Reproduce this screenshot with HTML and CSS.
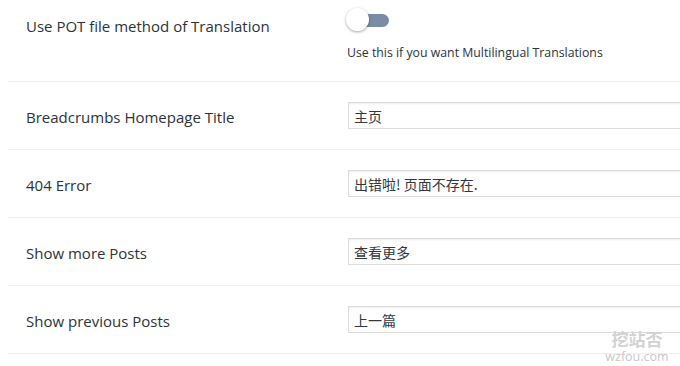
FILE: index.html
```html
<!DOCTYPE html>
<html lang="en">
<head>
    <meta charset="UTF-8">
    <title>Translation Settings</title>
    <link rel="stylesheet" href="styles.css">
</head>
<body>
    <div class="settings">
        <div class="row row-toggle">
            <div class="label">Use POT file method of Translation</div>
            <div class="field">
                <span class="toggle"><span class="knob"></span></span>
                <p class="desc">Use this if you want Multilingual Translations</p>
            </div>
        </div>
        <div class="row">
            <div class="label">Breadcrumbs Homepage Title</div>
            <div class="field"><input class="text" type="text" value="主页"></div>
        </div>
        <div class="row">
            <div class="label">404 Error</div>
            <div class="field"><input class="text" type="text" value="出错啦! 页面不存在."></div>
        </div>
        <div class="row">
            <div class="label">Show more Posts</div>
            <div class="field"><input class="text" type="text" value="查看更多"></div>
        </div>
        <div class="row">
            <div class="label">Show previous Posts</div>
            <div class="field"><input class="text" type="text" value="上一篇"></div>
        </div>
    </div>
    <div class="watermark">
        <div class="wm-cn">挖站否</div>
        <div class="wm-en">wzfou.com</div>
    </div>
</body>
</html>
```

FILE: styles.css
```css
body {
    margin: 0;
    background: #fff;
    font-family: "Open Sans", "Noto Sans CJK SC", sans-serif;
    color: #2c3338;
    overflow: hidden;
}
.settings {
    padding-left: 8px;
}
.row {
    display: grid;
    grid-template-columns: 340px 1fr;
    align-items: center;
    height: 67px;
    border-bottom: 1px solid #f0f0f0;
}
.label {
    padding-left: 18px;
    padding-top: 2px;
    font-size: 15px;
}
.row-toggle {
    height: 81px;
    align-items: start;
}
.row-toggle .label {
    padding-top: 16px;
}
.toggle {
    display: block;
    position: relative;
    width: 37px;
    height: 13px;
    margin: 14px 0 0 4px;
    background: #7a8da6;
    border-radius: 7px;
}
.knob {
    position: absolute;
    left: -6px;
    top: -6px;
    width: 23px;
    height: 23px;
    border-radius: 50%;
    background: #fff;
    box-shadow: 0 1px 3px rgba(0,0,0,0.35);
}
.desc {
    margin: 17px 0 0 -1px;
    font-size: 12.3px;
}
.text {
    box-sizing: border-box;
    width: 400px;
    height: 27px;
    margin: 0;
    padding: 0 5px;
    border: 1px solid #ddd;
    box-shadow: inset 0 1px 2px rgba(0,0,0,0.07);
    font-family: "Noto Sans CJK SC", sans-serif;
    font-size: 14px;
    color: #32373c;
    background: #fff;
}
.watermark {
    position: absolute;
    left: 606px;
    top: 330px;
    width: 62px;
    display: flex;
    flex-direction: column;
    align-items: center;
    color: #d2d2d2;
}
.wm-cn {
    font-family: "Noto Sans CJK SC", sans-serif;
    font-weight: 700;
    font-size: 17px;
    line-height: 17px;
}
.wm-en {
    font-family: "Open Sans", sans-serif;
    font-size: 12.5px;
    line-height: 12px;
    margin-top: 4px;
    color: #c8c8c8;
}
```
